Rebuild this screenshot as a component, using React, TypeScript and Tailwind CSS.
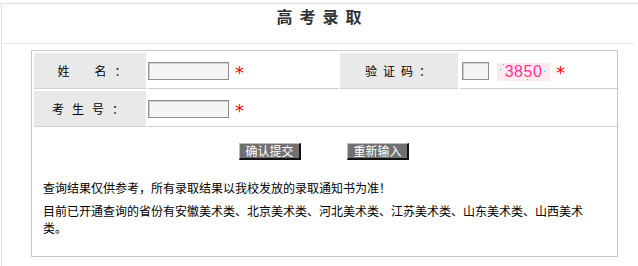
import React from "react";

const font = { fontFamily: '"Noto Sans CJK SC", "Noto Sans", sans-serif' };

function Star() {
  return (
    <span
      className="ml-[6px] text-[18px] leading-none text-[#ff0000] translate-y-[2px] inline-block"
      style={{ fontFamily: '"DejaVu Sans", sans-serif' }}
    >
      *
    </span>
  );
}

function Input({ w }: { w: string }) {
  return <div className={`${w} h-[18px] border border-[#8e8e8e] bg-[#f4f4f4] shadow-[inset_1px_1px_0_#cfcfcf]`} />;
}

export default function App() {
  return (
    <div className="w-[638px] h-[266px] bg-white overflow-hidden text-[12px] text-black" style={font}>
      <div className="mt-[3px] border-t border-[#dcdcdc]">
        <div className="ml-[1px] h-[263px] border-l border-[#e0e0e0]">
          <div className="ml-[1px] w-[630px] h-[40px] border-b border-[#e6e6e6] pt-[4px] text-center">
            <span className="text-[16px] leading-[16px] font-bold text-[#333] tracking-[7px] pl-[9px]">高考录取</span>
          </div>
          <div className="ml-[29px] mt-[6px] w-[587px] h-[207px] border border-[#c8c8c8]">
            <div className="grid grid-cols-[112px_190px_118px_157px] gap-[2px] p-[2px]">
              <div className="h-[36px] bg-[#e9e9e9] border-b border-[#d2d2d2] flex items-center justify-center">
                <span>姓</span>
                <span className="ml-[25px]">名</span>
                <span className="ml-[8px] mr-[-4px]">：</span>
              </div>
              <div className="h-[36px] border-b border-[#cccccc] flex items-center">
                <Input w="w-[81px]" />
                <Star />
              </div>
              <div className="h-[36px] bg-[#e9e9e9] border-b border-[#d2d2d2] flex items-center justify-center">
                <span className="tracking-[6px] pl-[4px]">验证码：</span>
              </div>
              <div className="h-[36px] border-b border-[#cccccc] flex items-center pl-[2px]">
                <Input w="w-[27px]" />
                <div className="relative ml-[8px] w-[53px] h-[18px] bg-[#ffebee] mt-[3px] flex items-center justify-center">
                  <span className="text-[16px] leading-none text-[#ff3399] tracking-[0.5px]" style={{ fontFamily: '"Liberation Sans", sans-serif' }}>3850</span>
                  <span className="absolute left-[3px] top-[6px] w-px h-px bg-[#33cccc]" />
                  <span className="absolute left-[6px] top-[1px] w-px h-px bg-[#33cccc]" />
                  <span className="absolute left-[30px] top-[16px] w-px h-px bg-[#33cccc]" />
                  <span className="absolute left-[47px] top-[8px] w-px h-px bg-[#33cccc]" />
                </div>
                <Star />
              </div>
              <div className="h-[36px] bg-[#e9e9e9] border-b border-[#d2d2d2] flex items-center justify-center">
                <span className="tracking-[8px] pl-[4px]">考生号：</span>
              </div>
              <div className="col-span-3 h-[36px] border-b border-[#cccccc] flex items-center">
                <Input w="w-[81px]" />
                <Star />
              </div>
            </div>
            <div className="mt-[14px] flex justify-center gap-[46px] pr-[1px]">
              <button className="w-[62px] h-[17px] bg-[#707070] text-white text-[12px] leading-[14px] border-t border-l border-[#bdbdbd] border-r-2 border-b-2 border-r-[#111] border-b-[#111]">
                确认提交
              </button>
              <button className="w-[62px] h-[17px] bg-[#707070] text-white text-[12px] leading-[14px] border-t border-l border-[#bdbdbd] border-r-2 border-b-2 border-r-[#111] border-b-[#111]">
                重新输入
              </button>
            </div>
            <div className="pl-[11px] mt-[19px] w-[560px] leading-[17px]">
              <p className="w-[546px]">查询结果仅供参考，所有录取结果以我校发放的录取通知书为准！</p>
              <p className="w-[546px] mt-[6px]">目前已开通查询的省份有安徽美术类、北京美术类、河北美术类、江苏美术类、山东美术类、山西美术类。</p>
            </div>
          </div>
        </div>
      </div>
    </div>
  );
}
